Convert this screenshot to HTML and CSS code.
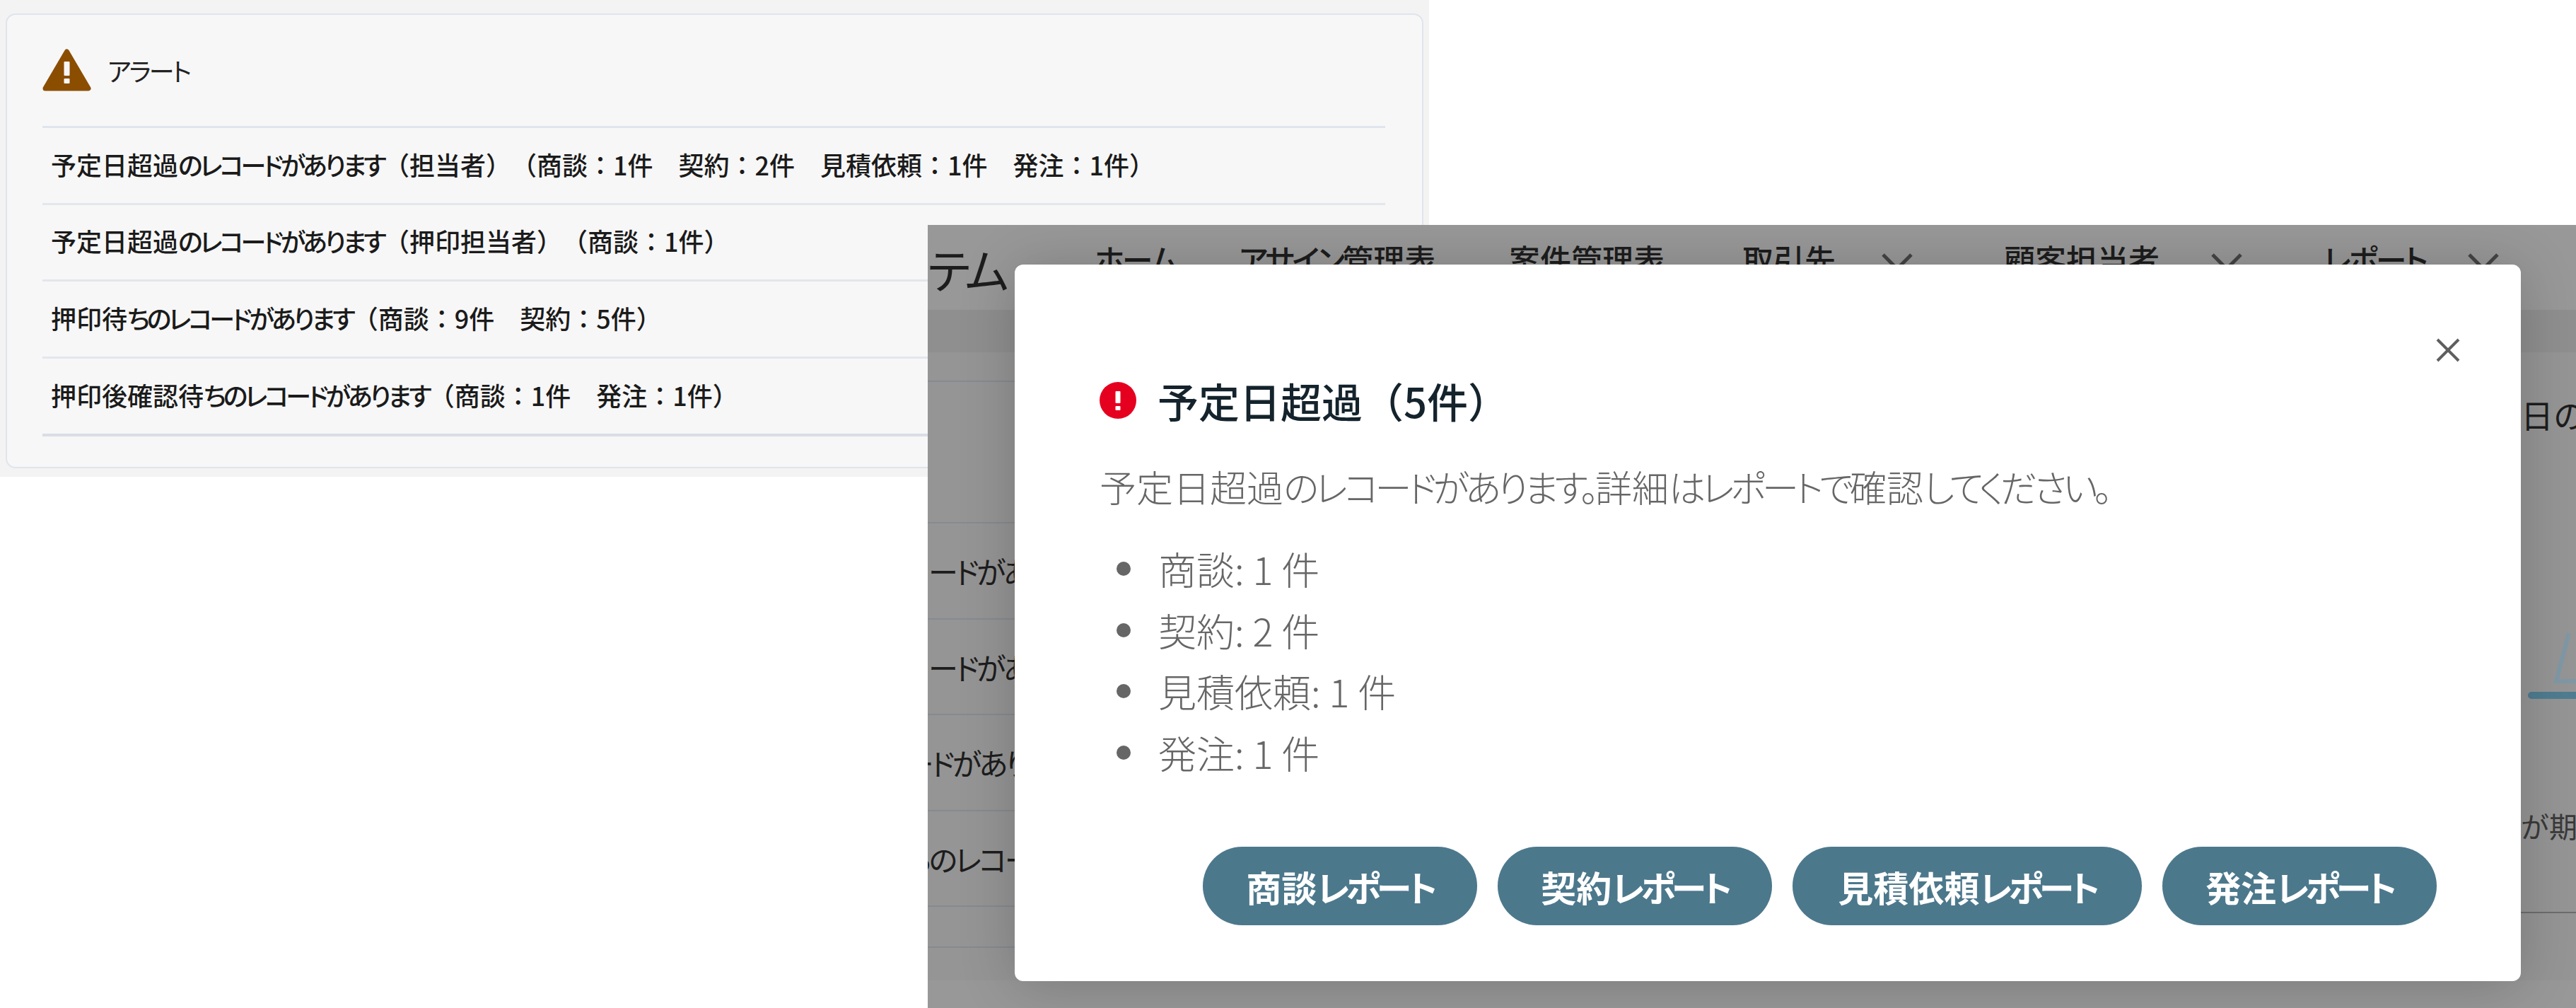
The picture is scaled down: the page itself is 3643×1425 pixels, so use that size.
FILE: index.html
```html
<!DOCTYPE html>
<html lang="ja">
<head>
    <meta charset="UTF-8">
    <title>アラート</title>
    <link rel="stylesheet" href="styles.css">
</head>
<body>
    <div class="page">
        <!-- Alert panel -->
        <section class="alert-panel">
            <div class="alert-card">
                <div class="alert-head">
                    <svg class="warn-icon" viewBox="0 0 69 60">
                        <path d="M34.5 4 L65 56 H4 Z" fill="#8b4d00" stroke="#8b4d00" stroke-width="7" stroke-linejoin="round"/>
                        <rect x="30.5" y="18" width="8" height="20" rx="1" fill="#f7f7f7"/>
                        <rect x="30.5" y="42" width="8" height="7" rx="1" fill="#f7f7f7"/>
                    </svg>
                    <span class="kana">アラート</span>
                </div>
                <div class="alert-row"><span>予定日超過<span class="kana">のレコードがあります</span>（担当者）（商談：1件　契約：2件　見積依頼：1件　発注：1件）</span></div>
                <div class="alert-row"><span>予定日超過<span class="kana">のレコードがあります</span>（押印担当者）（商談：1件）</span></div>
                <div class="alert-row"><span>押印待<span class="kana">ちのレコードがあります</span>（商談：9件　契約：5件）</span></div>
                <div class="alert-row alert-row-last"><span>押印後確認待<span class="kana">ちのレコードがあります</span>（商談：1件　発注：1件）</span></div>
            </div>
        </section>

        <!-- Dimmed page behind the dialog -->
        <section class="shot">
            <header class="bg-nav">
                <span class="bg-logo kana">テム</span>
                <span class="bg-link bg-home kana">ホーム</span>
                <span class="bg-link bg-assign"><span class="kana">アサイン</span>管理表</span>
                <span class="bg-link bg-case">案件管理表</span>
                <span class="bg-link bg-client">取引先</span>
                <svg class="bg-chev" viewBox="0 0 46 26"><path d="M3 3 L23 23 L43 3"/></svg>
                <span class="bg-link bg-owner">顧客担当者</span>
                <svg class="bg-chev" viewBox="0 0 46 26"><path d="M3 3 L23 23 L43 3"/></svg>
                <span class="bg-link bg-report kana">レポート</span>
                <svg class="bg-chev" viewBox="0 0 46 26"><path d="M3 3 L23 23 L43 3"/></svg>
            </header>
            <div class="bg-band"></div>
            <div class="bg-main">
                <div class="bg-list">
                    <div class="bg-row bg-row-title"></div>
                    <div class="bg-row bg-row-head"></div>
                    <div class="bg-row"><span>予定日超過<span class="kana">のレコードがあります</span></span></div>
                    <div class="bg-row"><span>予定日超過<span class="kana">のレコードがあります</span></span></div>
                    <div class="bg-row bg-row-wait"><span>押印待<span class="kana">ちのレコードがあります</span></span></div>
                    <div class="bg-row bg-row-check"><span>押印後確認待<span class="kana">ちのレコードがあります</span></span></div>
                    <div class="bg-row bg-row-end"></div>
                </div>
                <div class="bg-side">
                    <div class="bg-side-title">日の</div>
                    <svg class="bg-chart" viewBox="0 0 78 96">
                        <path class="bg-chart-tri" d="M68 2 L50 70 H78"/>
                        <path class="bg-chart-base" d="M15 90 H78"/>
                    </svg>
                    <div class="bg-side-note">が期</div>
                    <div class="bg-side-rule"></div>
                </div>
            </div>

            <!-- Dialog -->
            <div class="modal">
                <button class="modal-close" aria-label="close">
                    <svg viewBox="0 0 34 34"><path d="M2 2 L32 32 M32 2 L2 32"/></svg>
                </button>
                <h2 class="modal-title">
                    <svg class="err-icon" viewBox="0 0 52 52">
                        <circle cx="26" cy="26" r="26" fill="#e60020"/>
                        <rect x="22.500" y="13" width="7" height="17" rx="1" fill="#fff"/>
                        <rect x="22.500" y="34" width="7" height="6" rx="1" fill="#fff"/>
                    </svg>
                    <span>予定日超過（5件）</span>
                </h2>
                <p class="modal-text">予定日超過<span class="kana">のレコードがあります。</span>詳細<span class="kana">はレポートで</span>確認<span class="kana">してください。</span></p>
                <ul class="modal-list">
                    <li>商談: 1 件</li>
                    <li>契約: 2 件</li>
                    <li>見積依頼: 1 件</li>
                    <li>発注: 1 件</li>
                </ul>
                <div class="modal-actions">
                    <button class="pill pill-a">商談<span class="kana">レポート</span></button>
                    <button class="pill pill-a">契約<span class="kana">レポート</span></button>
                    <button class="pill pill-b">見積依頼<span class="kana">レポート</span></button>
                    <button class="pill pill-a">発注<span class="kana">レポート</span></button>
                </div>
            </div>
        </section>
    </div>
</body>
</html>
```
FILE: styles.css
```css
* {
    box-sizing: border-box;
}

body {
    margin: 0;
    background: #fff;
    font-family: "Noto Sans CJK JP", "Noto Sans", sans-serif;
    text-spacing-trim: space-all;
}

.kana {
    font-feature-settings: "palt";
    letter-spacing: -0.08em;
}

.page {
    position: relative;
    width: 3643px;
    height: 1425px;
    overflow: hidden;
}

/* Alert panel */
.alert-panel {
    width: 2021px;
    height: 674px;
    padding: 19px 8px 12px;
    background: #f3f3f3;
}

.alert-card {
    height: 100%;
    padding: 0 52px 0 50px;
    background: #f7f7f7;
    border: 2px solid #dfe4ee;
    border-radius: 14px;
}

.alert-head {
    display: flex;
    align-items: center;
    gap: 23px;
    height: 160px;
    padding-bottom: 2px;
    border-bottom: 3px solid #dfe4ee;
    color: #222;
    font-size: 36px;
}

.warn-icon {
    width: 69px;
    height: 60px;
}

.alert-row {
    display: flex;
    align-items: center;
    height: 108.500px;
    padding: 0 0 4px 12px;
    border-bottom: 3px solid #e3e6ed;
    color: #1b1b1b;
    font-size: 36px;
    font-weight: 500;
    white-space: pre;
}

.alert-row .kana {
    letter-spacing: -0.11em;
}

.alert-row-last {
    height: 110px;
    border-bottom: 4px solid #d9dde6;
}

/* Dimmed screenshot behind the dialog */
.shot {
    position: absolute;
    top: 318px;
    left: 1312px;
    right: 0;
    bottom: 0;
    overflow: hidden;
    background: #989898;
    color: #1d1d1d;
}

.bg-nav {
    display: flex;
    align-items: flex-start;
    height: 120px;
    padding-top: 22px;
    white-space: nowrap;
}

.bg-logo {
    width: 236px;
    font-size: 66px;
    line-height: 1.2;
}

.bg-link {
    font-size: 44px;
    font-weight: 500;
    line-height: 1.2;
}

.bg-home { width: 204px; }
.bg-assign { width: 382px; }
.bg-case { width: 330px; }
.bg-client { width: 196px; }
.bg-owner { width: 292px; margin-left: 128px; }
.bg-report { width: 203px; margin-left: 114px; }

.bg-chev {
    width: 46px;
    height: 26px;
    margin-top: 17px;
    fill: none;
    stroke: #444;
    stroke-width: 5;
}

.bg-band {
    height: 60px;
    background: #8f8f8f;
}

.bg-main {
    display: flex;
    justify-content: space-between;
    height: 888px;
    background: #959595;
}

.bg-list {
    width: 123px;
    overflow: hidden;
}

.bg-row {
    display: flex;
    align-items: center;
    height: 135.500px;
    border-bottom: 2px solid #858b90;
    font-size: 42px;
    white-space: nowrap;
}

.bg-row > span {
    margin-left: -316px;
}

.bg-row-wait > span { margin-left: -300px; }
.bg-row-check > span { margin-left: -284px; }

.bg-row-title { height: 42px; }
.bg-row-head { height: 200px; }
.bg-row-end { height: 58px; }

.bg-side {
    display: flex;
    flex-direction: column;
    width: 78px;
    padding-top: 60px;
    overflow: hidden;
}

.bg-side-title {
    font-size: 46px;
    line-height: 1.2;
    white-space: nowrap;
}

.bg-chart {
    width: 78px;
    height: 96px;
    margin-top: 280px;
    flex: none;
    fill: none;
}

.bg-chart-tri {
    stroke: #7f98a6;
    stroke-width: 6;
}

.bg-chart-base {
    stroke: #4f7c90;
    stroke-width: 10;
    stroke-linecap: round;
}

.bg-side-note {
    margin-top: 154px;
    color: #3a3a3a;
    font-size: 40px;
    line-height: 1.2;
    white-space: nowrap;
}

.bg-side-rule {
    margin-top: 98px;
    border-bottom: 2px solid #6d6d6d;
}

/* Dialog */
.modal {
    position: absolute;
    top: 56px;
    left: 123px;
    display: flex;
    flex-direction: column;
    width: 2130px;
    height: 1013px;
    padding: 164px 119px 0 120px;
    background: #fff;
    border-radius: 12px;
    box-shadow: 0 6px 80px rgba(0, 0, 0, 0.2);
}

.modal-close {
    position: absolute;
    top: 104px;
    right: 86px;
    width: 34px;
    height: 34px;
    padding: 0;
    background: none;
    border: 0;
}

.modal-close svg {
    display: block;
    fill: none;
    stroke: #5f5f5f;
    stroke-width: 4;
}

.modal-title {
    display: flex;
    align-items: center;
    gap: 30px;
    margin: 0;
    color: #14232c;
    font-size: 58px;
    font-weight: 500;
    line-height: 56px;
}

.err-icon {
    width: 52px;
    height: 52px;
}

.modal-text {
    margin: 57px 0 0;
    color: #666;
    font-size: 52px;
    font-weight: 300;
    line-height: 74px;
}

.modal-text .kana {
    letter-spacing: -0.1em;
}

.modal-list {
    display: flex;
    flex-direction: column;
    margin: 36px 0 0;
    padding: 0 0 0 83px;
    color: #666;
    font-size: 54px;
    font-weight: 300;
    line-height: 86.500px;
    list-style: none;
}

.modal-list li {
    position: relative;
}

/* Bullet dot */
.modal-list li::before {
    content: "";
    position: absolute;
    top: 33px;
    left: -59px;
    width: 20px;
    height: 20px;
    background: #666;
    border-radius: 50%;
}

.modal-actions {
    display: flex;
    justify-content: flex-end;
    gap: 29px;
    margin-top: 90px;
}

.pill {
    height: 111px;
    padding: 0;
    background: #4c788c;
    border: 0;
    border-radius: 56px;
    color: #fff;
    font-family: inherit;
    font-size: 50px;
    font-weight: 700;
}

.pill .kana {
    letter-spacing: -0.1em;
}

.pill-a { width: 388px; }
.pill-b { width: 494px; }
```
